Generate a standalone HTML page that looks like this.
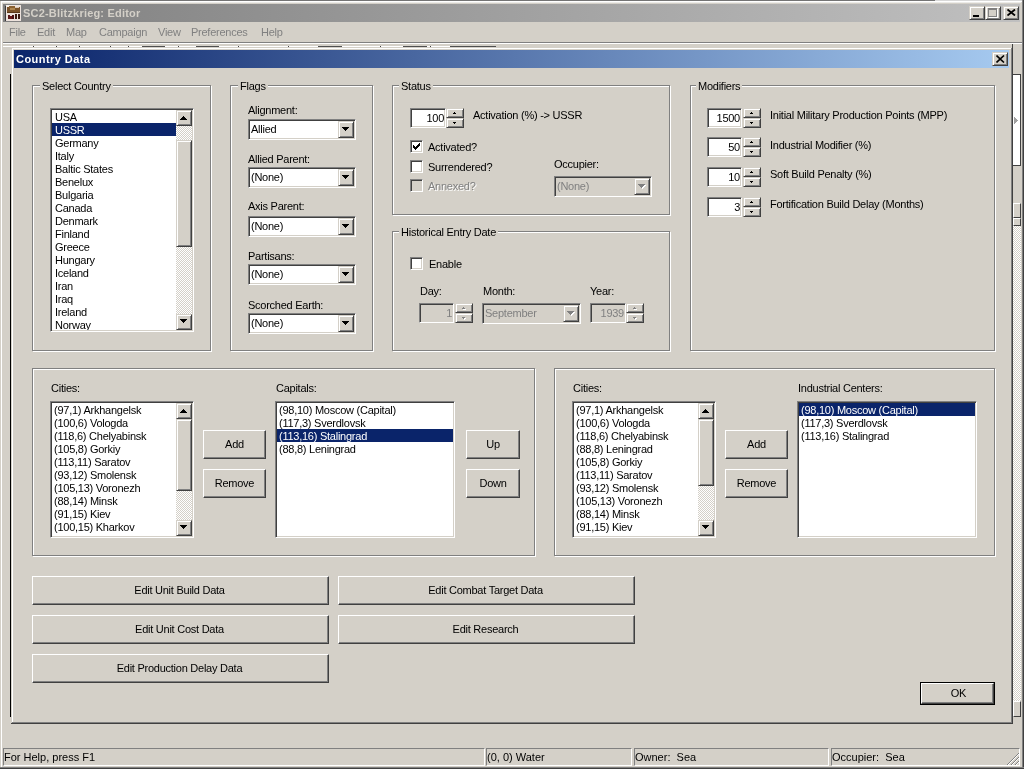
<!DOCTYPE html><html><head><meta charset="utf-8"><style>
html,body{margin:0;padding:0;width:1024px;height:769px;overflow:hidden;background:#d4d0c8}
div{position:absolute;box-sizing:border-box}
.t{will-change:transform;font-family:"Liberation Sans",sans-serif;font-size:11px;line-height:13px;white-space:pre;color:#000}
</style></head><body>
<div style="left:0px;top:0px;width:1024px;height:769px;background:#d4d0c8"></div>
<div style="left:0px;top:0px;width:935px;height:1px;background:#747474"></div>
<div style="left:935px;top:0px;width:89px;height:1px;background:#d8d8d8"></div>
<div style="left:2px;top:2px;width:1019px;height:1px;background:#ecebe8"></div>
<div style="left:1px;top:1px;width:1021px;height:1px;background:#ffffff"></div>
<div style="left:1px;top:1px;width:1px;height:766px;background:#ffffff"></div>
<div style="left:1022px;top:0px;width:1px;height:769px;background:#808080"></div>
<div style="left:1023px;top:0px;width:1px;height:769px;background:#404040"></div>
<div style="left:0px;top:767px;width:1024px;height:1px;background:#808080"></div>
<div style="left:0px;top:768px;width:1024px;height:1px;background:#404040"></div>
<div style="left:3px;top:4px;width:1017px;height:18px;background:linear-gradient(to right,#808080,#c0c0c0)"></div>
<svg style="position:absolute;left:5px;top:5px" width="16" height="16" viewBox="0 0 16 16" shape-rendering="crispEdges">
<rect x="1" y="0" width="15" height="16" fill="#ece2dc"/>
<rect x="0" y="1" width="1" height="15" fill="#3a3a3a"/>
<rect x="2" y="2" width="13" height="6" fill="#7a5228"/>
<rect x="1" y="0" width="4" height="2" fill="#f4eee8"/>
<rect x="4" y="1" width="6" height="2" fill="#8a6030"/>
<rect x="5" y="3" width="5" height="2" fill="#b08850"/>
<rect x="10" y="2" width="4" height="1" fill="#d8c8b8"/>
<rect x="2" y="7" width="13" height="1" fill="#5a3818"/>
<rect x="3" y="10" width="2" height="4" fill="#5a1818"/>
<rect x="5" y="11" width="2" height="3" fill="#6a1818"/>
<rect x="7" y="10" width="2" height="4" fill="#4a1010"/>
<rect x="10" y="9" width="2" height="5" fill="#3a1a10"/>
<rect x="13" y="9" width="2" height="5" fill="#3a1a10"/>
</svg>
<div class="t" style="left:23px;top:7px;color:#d4d0c8;font-weight:bold;letter-spacing:0.2px;font-size:11px;">SC2-Blitzkrieg: Editor</div>
<div style="left:969px;top:6px;width:16px;height:14px;background:#d4d0c8;border-style:solid;border-width:1px;border-color:#d4d0c8 #404040 #404040 #d4d0c8;box-shadow:inset 1px 1px #ffffff,inset -1px -1px #808080"></div>
<div style="left:985px;top:6px;width:16px;height:14px;background:#d4d0c8;border-style:solid;border-width:1px;border-color:#d4d0c8 #404040 #404040 #d4d0c8;box-shadow:inset 1px 1px #ffffff,inset -1px -1px #808080"></div>
<div style="left:1003px;top:6px;width:16px;height:14px;background:#d4d0c8;border-style:solid;border-width:1px;border-color:#d4d0c8 #404040 #404040 #d4d0c8;box-shadow:inset 1px 1px #ffffff,inset -1px -1px #808080"></div>
<div style="left:973px;top:15px;width:6px;height:2px;background:#000"></div>
<div style="left:988px;top:8px;width:9px;height:9px;border:1px solid #808080;border-top-width:2px;box-shadow:1px 1px #ffffff"></div>
<svg style="position:absolute;left:1007px;top:9px" width="9" height="7"><path d="M0.5 0.5 L8 6.5 M8 0.5 L0.5 6.5" stroke="#000" stroke-width="1.8"/></svg>
<div class="t" style="left:9px;top:26px;color:#808080;letter-spacing:-0.25px;font-size:11px;">File</div>
<div class="t" style="left:37px;top:26px;color:#808080;letter-spacing:-0.25px;font-size:11px;">Edit</div>
<div class="t" style="left:66px;top:26px;color:#808080;letter-spacing:-0.25px;font-size:11px;">Map</div>
<div class="t" style="left:99px;top:26px;color:#808080;letter-spacing:-0.25px;font-size:11px;">Campaign</div>
<div class="t" style="left:158px;top:26px;color:#808080;letter-spacing:-0.25px;font-size:11px;">View</div>
<div class="t" style="left:191px;top:26px;color:#808080;letter-spacing:-0.25px;font-size:11px;">Preferences</div>
<div class="t" style="left:261px;top:26px;color:#808080;letter-spacing:-0.25px;font-size:11px;">Help</div>
<div style="left:3px;top:42px;width:1019px;height:1px;background:#808080"></div>
<div style="left:3px;top:43px;width:1019px;height:1px;background:#ffffff"></div>
<div style="left:3px;top:46px;width:493px;height:1px;background:#ffffff"></div>
<div style="left:142px;top:46px;width:23px;height:1px;background:#505050"></div>
<div style="left:196px;top:46px;width:23px;height:1px;background:#505050"></div>
<div style="left:318px;top:46px;width:24px;height:1px;background:#505050"></div>
<div style="left:403px;top:46px;width:24px;height:1px;background:#505050"></div>
<div style="left:450px;top:46px;width:23px;height:1px;background:#505050"></div>
<div style="left:473px;top:46px;width:23px;height:1px;background:#505050"></div>
<div style="left:33px;top:46px;width:1px;height:1px;background:#404040"></div>
<div style="left:56px;top:46px;width:1px;height:1px;background:#404040"></div>
<div style="left:79px;top:46px;width:1px;height:1px;background:#404040"></div>
<div style="left:110px;top:46px;width:1px;height:1px;background:#404040"></div>
<div style="left:128px;top:46px;width:1px;height:1px;background:#404040"></div>
<div style="left:178px;top:46px;width:1px;height:1px;background:#404040"></div>
<div style="left:238px;top:46px;width:1px;height:1px;background:#404040"></div>
<div style="left:288px;top:46px;width:1px;height:1px;background:#404040"></div>
<div style="left:380px;top:46px;width:1px;height:1px;background:#404040"></div>
<div style="left:430px;top:46px;width:1px;height:1px;background:#404040"></div>
<div style="left:1012px;top:44px;width:1px;height:679px;background:#404040"></div>
<div style="left:1013px;top:74px;width:7px;height:91px;background:#ffffff"></div>
<div style="left:1020px;top:74px;width:1px;height:92px;background:#404040"></div>
<div style="left:1013px;top:74px;width:7px;height:1px;background:#404040"></div>
<div style="left:1013px;top:165px;width:7px;height:1px;background:#404040"></div>
<div style="left:1014px;top:117px;width:1px;height:1px;background:#a0a0a0"></div>
<div style="left:1014px;top:118px;width:2px;height:1px;background:#a0a0a0"></div>
<div style="left:1014px;top:119px;width:3px;height:1px;background:#a0a0a0"></div>
<div style="left:1014px;top:120px;width:4px;height:1px;background:#a0a0a0"></div>
<div style="left:1014px;top:121px;width:3px;height:1px;background:#a0a0a0"></div>
<div style="left:1014px;top:122px;width:2px;height:1px;background:#a0a0a0"></div>
<div style="left:1014px;top:123px;width:1px;height:1px;background:#a0a0a0"></div>
<div style="left:1013px;top:203px;width:8px;height:15px;background:#d4d0c8;border-style:solid;border-width:1px;border-color:#ffffff #404040 #404040 #ffffff"></div>
<div style="left:1013px;top:218px;width:8px;height:8px;background:#d4d0c8;border-style:solid;border-width:1px;border-color:#ffffff #404040 #404040 #ffffff"></div>
<div style="left:1013px;top:226px;width:8px;height:475px;background-color:#fff;background-image:linear-gradient(45deg,#d4d0c8 25%,transparent 25%,transparent 75%,#d4d0c8 75%),linear-gradient(45deg,#d4d0c8 25%,transparent 25%,transparent 75%,#d4d0c8 75%);background-size:2px 2px;background-position:0 0,1px 1px"></div>
<div style="left:1013px;top:701px;width:8px;height:16px;background:#d4d0c8;border-style:solid;border-width:1px;border-color:#ffffff #404040 #404040 #ffffff"></div>
<div style="left:10px;top:74px;width:1px;height:643px;background:#000"></div>
<div style="left:11px;top:47px;width:1002px;height:677px;background:#d4d0c8"></div>
<div style="left:12px;top:48px;width:999px;height:1px;background:#ffffff"></div>
<div style="left:12px;top:48px;width:1px;height:675px;background:#ffffff"></div>
<div style="left:1011px;top:48px;width:1px;height:675px;background:#808080"></div>
<div style="left:12px;top:722px;width:1000px;height:1px;background:#808080"></div>
<div style="left:1012px;top:47px;width:1px;height:677px;background:#404040"></div>
<div style="left:11px;top:723px;width:1002px;height:1px;background:#404040"></div>
<div style="left:14px;top:50px;width:995px;height:18px;background:linear-gradient(to right,#0a246a,#a6caf0)"></div>
<div class="t" style="left:16px;top:53px;color:#fff;font-weight:bold;letter-spacing:0.45px;font-size:11px;">Country Data</div>
<div style="left:992px;top:52px;width:16px;height:14px;background:#d4d0c8;border-style:solid;border-width:1px;border-color:#d4d0c8 #404040 #404040 #d4d0c8;box-shadow:inset 1px 1px #ffffff,inset -1px -1px #808080"></div>
<svg style="position:absolute;left:996px;top:55px" width="9" height="8"><path d="M0.5 0.5 L8 7.5 M8 0.5 L0.5 7.5" stroke="#000" stroke-width="1.6"/></svg>
<div style="left:32px;top:85px;width:179px;height:266px;border:1px solid #808080;box-shadow:inset 1px 1px #ffffff,1px 1px #ffffff"></div>
<div class="t" style="left:40px;top:80px;padding:0 2px;background:#d4d0c8;letter-spacing:-0.25px;height:13px">Select Country</div>
<div style="left:230px;top:85px;width:143px;height:266px;border:1px solid #808080;box-shadow:inset 1px 1px #ffffff,1px 1px #ffffff"></div>
<div class="t" style="left:238px;top:80px;padding:0 2px;background:#d4d0c8;letter-spacing:-0.25px;height:13px">Flags</div>
<div style="left:392px;top:85px;width:278px;height:130px;border:1px solid #808080;box-shadow:inset 1px 1px #ffffff,1px 1px #ffffff"></div>
<div class="t" style="left:399px;top:80px;padding:0 2px;background:#d4d0c8;letter-spacing:-0.25px;height:13px">Status</div>
<div style="left:392px;top:231px;width:278px;height:120px;border:1px solid #808080;box-shadow:inset 1px 1px #ffffff,1px 1px #ffffff"></div>
<div class="t" style="left:399px;top:226px;padding:0 2px;background:#d4d0c8;letter-spacing:-0.25px;height:13px">Historical Entry Date</div>
<div style="left:690px;top:85px;width:305px;height:266px;border:1px solid #808080;box-shadow:inset 1px 1px #ffffff,1px 1px #ffffff"></div>
<div class="t" style="left:696px;top:80px;padding:0 2px;background:#d4d0c8;letter-spacing:-0.25px;height:13px">Modifiers</div>
<div style="left:32px;top:368px;width:503px;height:188px;border:1px solid #808080;box-shadow:inset 1px 1px #ffffff,1px 1px #ffffff"></div>
<div style="left:554px;top:368px;width:441px;height:188px;border:1px solid #808080;box-shadow:inset 1px 1px #ffffff,1px 1px #ffffff"></div>
<div style="left:50px;top:108px;width:144px;height:224px;background:#ffffff;border-style:solid;border-width:1px;border-color:#808080 #ffffff #ffffff #808080;box-shadow:inset 1px 1px #404040,inset -1px -1px #d4d0c8"></div>
<div style="left:52px;top:110px;width:124px;height:220px;overflow:hidden">
<div class="t" style="left:3px;top:1px;color:#000;letter-spacing:-0.25px">USA</div>
<div style="left:0;top:13px;width:124px;height:13px;background:#0a246a"></div>
<div class="t" style="left:3px;top:14px;color:#fff;letter-spacing:-0.25px">USSR</div>
<div class="t" style="left:3px;top:27px;color:#000;letter-spacing:-0.25px">Germany</div>
<div class="t" style="left:3px;top:40px;color:#000;letter-spacing:-0.25px">Italy</div>
<div class="t" style="left:3px;top:53px;color:#000;letter-spacing:-0.25px">Baltic States</div>
<div class="t" style="left:3px;top:66px;color:#000;letter-spacing:-0.25px">Benelux</div>
<div class="t" style="left:3px;top:79px;color:#000;letter-spacing:-0.25px">Bulgaria</div>
<div class="t" style="left:3px;top:92px;color:#000;letter-spacing:-0.25px">Canada</div>
<div class="t" style="left:3px;top:105px;color:#000;letter-spacing:-0.25px">Denmark</div>
<div class="t" style="left:3px;top:118px;color:#000;letter-spacing:-0.25px">Finland</div>
<div class="t" style="left:3px;top:131px;color:#000;letter-spacing:-0.25px">Greece</div>
<div class="t" style="left:3px;top:144px;color:#000;letter-spacing:-0.25px">Hungary</div>
<div class="t" style="left:3px;top:157px;color:#000;letter-spacing:-0.25px">Iceland</div>
<div class="t" style="left:3px;top:170px;color:#000;letter-spacing:-0.25px">Iran</div>
<div class="t" style="left:3px;top:183px;color:#000;letter-spacing:-0.25px">Iraq</div>
<div class="t" style="left:3px;top:196px;color:#000;letter-spacing:-0.25px">Ireland</div>
<div class="t" style="left:3px;top:209px;color:#000;letter-spacing:-0.25px">Norway</div>
<div class="t" style="left:3px;top:222px;color:#000;letter-spacing:-0.25px">Poland</div>
</div>
<div style="left:176px;top:110px;width:16px;height:220px;background-color:#fff;background-image:linear-gradient(45deg,#d4d0c8 25%,transparent 25%,transparent 75%,#d4d0c8 75%),linear-gradient(45deg,#d4d0c8 25%,transparent 25%,transparent 75%,#d4d0c8 75%);background-size:2px 2px;background-position:0 0,1px 1px"></div>
<div style="left:176px;top:110px;width:16px;height:16px;background:#d4d0c8;border-style:solid;border-width:1px;border-color:#d4d0c8 #404040 #404040 #d4d0c8;box-shadow:inset 1px 1px #ffffff,inset -1px -1px #808080"></div>
<div style="left:183px;top:116px;width:1px;height:1px;background:#000"></div>
<div style="left:182px;top:117px;width:3px;height:1px;background:#000"></div>
<div style="left:181px;top:118px;width:5px;height:1px;background:#000"></div>
<div style="left:180px;top:119px;width:7px;height:1px;background:#000"></div>
<div style="left:176px;top:314px;width:16px;height:16px;background:#d4d0c8;border-style:solid;border-width:1px;border-color:#d4d0c8 #404040 #404040 #d4d0c8;box-shadow:inset 1px 1px #ffffff,inset -1px -1px #808080"></div>
<div style="left:180px;top:319px;width:7px;height:1px;background:#000"></div>
<div style="left:181px;top:320px;width:5px;height:1px;background:#000"></div>
<div style="left:182px;top:321px;width:3px;height:1px;background:#000"></div>
<div style="left:183px;top:322px;width:1px;height:1px;background:#000"></div>
<div style="left:176px;top:140px;width:16px;height:107px;background:#d4d0c8;border-style:solid;border-width:1px;border-color:#d4d0c8 #404040 #404040 #d4d0c8;box-shadow:inset 1px 1px #ffffff,inset -1px -1px #808080"></div>
<div class="t" style="left:248px;top:104px;color:#000;letter-spacing:-0.25px;font-size:11px;">Alignment:</div>
<div style="left:248px;top:119px;width:108px;height:21px;background:#ffffff;border-style:solid;border-width:1px;border-color:#808080 #ffffff #ffffff #808080;box-shadow:inset 1px 1px #404040,inset -1px -1px #d4d0c8"></div>
<div style="left:338px;top:121px;width:16px;height:17px;background:#d4d0c8;border-style:solid;border-width:1px;border-color:#d4d0c8 #404040 #404040 #d4d0c8;box-shadow:inset 1px 1px #ffffff,inset -1px -1px #808080"></div>
<div style="left:342px;top:127px;width:7px;height:1px;background:#000"></div>
<div style="left:343px;top:128px;width:5px;height:1px;background:#000"></div>
<div style="left:344px;top:129px;width:3px;height:1px;background:#000"></div>
<div style="left:345px;top:130px;width:1px;height:1px;background:#000"></div>
<div class="t" style="left:251px;top:123px;color:#000;letter-spacing:-0.25px;font-size:11px;">Allied</div>
<div class="t" style="left:248px;top:153px;color:#000;letter-spacing:-0.25px;font-size:11px;">Allied Parent:</div>
<div style="left:248px;top:167px;width:108px;height:21px;background:#ffffff;border-style:solid;border-width:1px;border-color:#808080 #ffffff #ffffff #808080;box-shadow:inset 1px 1px #404040,inset -1px -1px #d4d0c8"></div>
<div style="left:338px;top:169px;width:16px;height:17px;background:#d4d0c8;border-style:solid;border-width:1px;border-color:#d4d0c8 #404040 #404040 #d4d0c8;box-shadow:inset 1px 1px #ffffff,inset -1px -1px #808080"></div>
<div style="left:342px;top:175px;width:7px;height:1px;background:#000"></div>
<div style="left:343px;top:176px;width:5px;height:1px;background:#000"></div>
<div style="left:344px;top:177px;width:3px;height:1px;background:#000"></div>
<div style="left:345px;top:178px;width:1px;height:1px;background:#000"></div>
<div class="t" style="left:251px;top:171px;color:#000;letter-spacing:-0.25px;font-size:11px;">(None)</div>
<div class="t" style="left:248px;top:200px;color:#000;letter-spacing:-0.25px;font-size:11px;">Axis Parent:</div>
<div style="left:248px;top:216px;width:108px;height:21px;background:#ffffff;border-style:solid;border-width:1px;border-color:#808080 #ffffff #ffffff #808080;box-shadow:inset 1px 1px #404040,inset -1px -1px #d4d0c8"></div>
<div style="left:338px;top:218px;width:16px;height:17px;background:#d4d0c8;border-style:solid;border-width:1px;border-color:#d4d0c8 #404040 #404040 #d4d0c8;box-shadow:inset 1px 1px #ffffff,inset -1px -1px #808080"></div>
<div style="left:342px;top:224px;width:7px;height:1px;background:#000"></div>
<div style="left:343px;top:225px;width:5px;height:1px;background:#000"></div>
<div style="left:344px;top:226px;width:3px;height:1px;background:#000"></div>
<div style="left:345px;top:227px;width:1px;height:1px;background:#000"></div>
<div class="t" style="left:251px;top:220px;color:#000;letter-spacing:-0.25px;font-size:11px;">(None)</div>
<div class="t" style="left:248px;top:250px;color:#000;letter-spacing:-0.25px;font-size:11px;">Partisans:</div>
<div style="left:248px;top:264px;width:108px;height:21px;background:#ffffff;border-style:solid;border-width:1px;border-color:#808080 #ffffff #ffffff #808080;box-shadow:inset 1px 1px #404040,inset -1px -1px #d4d0c8"></div>
<div style="left:338px;top:266px;width:16px;height:17px;background:#d4d0c8;border-style:solid;border-width:1px;border-color:#d4d0c8 #404040 #404040 #d4d0c8;box-shadow:inset 1px 1px #ffffff,inset -1px -1px #808080"></div>
<div style="left:342px;top:272px;width:7px;height:1px;background:#000"></div>
<div style="left:343px;top:273px;width:5px;height:1px;background:#000"></div>
<div style="left:344px;top:274px;width:3px;height:1px;background:#000"></div>
<div style="left:345px;top:275px;width:1px;height:1px;background:#000"></div>
<div class="t" style="left:251px;top:268px;color:#000;letter-spacing:-0.25px;font-size:11px;">(None)</div>
<div class="t" style="left:248px;top:299px;color:#000;letter-spacing:-0.25px;font-size:11px;">Scorched Earth:</div>
<div style="left:248px;top:313px;width:108px;height:21px;background:#ffffff;border-style:solid;border-width:1px;border-color:#808080 #ffffff #ffffff #808080;box-shadow:inset 1px 1px #404040,inset -1px -1px #d4d0c8"></div>
<div style="left:338px;top:315px;width:16px;height:17px;background:#d4d0c8;border-style:solid;border-width:1px;border-color:#d4d0c8 #404040 #404040 #d4d0c8;box-shadow:inset 1px 1px #ffffff,inset -1px -1px #808080"></div>
<div style="left:342px;top:321px;width:7px;height:1px;background:#000"></div>
<div style="left:343px;top:322px;width:5px;height:1px;background:#000"></div>
<div style="left:344px;top:323px;width:3px;height:1px;background:#000"></div>
<div style="left:345px;top:324px;width:1px;height:1px;background:#000"></div>
<div class="t" style="left:251px;top:317px;color:#000;letter-spacing:-0.25px;font-size:11px;">(None)</div>
<div style="left:410px;top:108px;width:36px;height:20px;background:#ffffff;border-style:solid;border-width:1px;border-color:#808080 #ffffff #ffffff #808080;box-shadow:inset 1px 1px #404040,inset -1px -1px #d4d0c8"></div>
<div class="t" style="left:244px;top:112px;width:200px;text-align:right;color:#000;letter-spacing:-0.25px">100</div>
<div style="left:446px;top:108px;width:18px;height:10px;background:#d4d0c8;border-style:solid;border-width:1px;border-color:#d4d0c8 #404040 #404040 #d4d0c8;box-shadow:inset 1px 1px #ffffff,inset -1px -1px #808080"></div>
<div style="left:446px;top:118px;width:18px;height:10px;background:#d4d0c8;border-style:solid;border-width:1px;border-color:#d4d0c8 #404040 #404040 #d4d0c8;box-shadow:inset 1px 1px #ffffff,inset -1px -1px #808080"></div>
<div style="left:454px;top:112px;width:1px;height:1px;background:#000"></div>
<div style="left:453px;top:113px;width:3px;height:1px;background:#000"></div>
<div style="left:453px;top:122px;width:3px;height:1px;background:#000"></div>
<div style="left:454px;top:123px;width:1px;height:1px;background:#000"></div>
<div class="t" style="left:473px;top:109px;color:#000;letter-spacing:-0.25px;font-size:11px;">Activation (%) -&gt; USSR</div>
<div style="left:410px;top:140px;width:13px;height:13px;background:#ffffff;border-style:solid;border-width:1px;border-color:#808080 #ffffff #ffffff #808080;box-shadow:inset 1px 1px #404040,inset -1px -1px #d4d0c8"></div>
<div style="left:413px;top:145px;width:1px;height:3px;background:#000"></div>
<div style="left:414px;top:146px;width:1px;height:3px;background:#000"></div>
<div style="left:415px;top:147px;width:1px;height:3px;background:#000"></div>
<div style="left:416px;top:146px;width:1px;height:3px;background:#000"></div>
<div style="left:417px;top:145px;width:1px;height:3px;background:#000"></div>
<div style="left:418px;top:144px;width:1px;height:3px;background:#000"></div>
<div style="left:419px;top:143px;width:1px;height:3px;background:#000"></div>
<div class="t" style="left:428px;top:141px;color:#000;letter-spacing:-0.25px;font-size:11px;">Activated?</div>
<div style="left:410px;top:160px;width:13px;height:13px;background:#ffffff;border-style:solid;border-width:1px;border-color:#808080 #ffffff #ffffff #808080;box-shadow:inset 1px 1px #404040,inset -1px -1px #d4d0c8"></div>
<div class="t" style="left:428px;top:161px;color:#000;letter-spacing:-0.25px;font-size:11px;">Surrendered?</div>
<div style="left:410px;top:179px;width:13px;height:13px;background:#d4d0c8;border-style:solid;border-width:1px;border-color:#808080 #ffffff #ffffff #808080;box-shadow:inset 1px 1px #404040,inset -1px -1px #d4d0c8"></div>
<div class="t" style="left:428px;top:180px;color:#808080;letter-spacing:-0.25px;font-size:11px;text-shadow:1px 1px #fff">Annexed?</div>
<div class="t" style="left:554px;top:158px;color:#000;letter-spacing:-0.25px;font-size:11px;">Occupier:</div>
<div style="left:554px;top:176px;width:98px;height:21px;background:#d4d0c8;border-style:solid;border-width:1px;border-color:#808080 #ffffff #ffffff #808080;box-shadow:inset 1px 1px #404040,inset -1px -1px #d4d0c8"></div>
<div style="left:634px;top:178px;width:16px;height:17px;background:#d4d0c8;border-style:solid;border-width:1px;border-color:#d4d0c8 #404040 #404040 #d4d0c8;box-shadow:inset 1px 1px #ffffff,inset -1px -1px #808080"></div>
<div style="left:639px;top:185px;width:7px;height:1px;background:#ffffff"></div>
<div style="left:640px;top:186px;width:5px;height:1px;background:#ffffff"></div>
<div style="left:641px;top:187px;width:3px;height:1px;background:#ffffff"></div>
<div style="left:642px;top:188px;width:1px;height:1px;background:#ffffff"></div>
<div style="left:638px;top:184px;width:7px;height:1px;background:#808080"></div>
<div style="left:639px;top:185px;width:5px;height:1px;background:#808080"></div>
<div style="left:640px;top:186px;width:3px;height:1px;background:#808080"></div>
<div style="left:641px;top:187px;width:1px;height:1px;background:#808080"></div>
<div class="t" style="left:557px;top:180px;color:#808080;letter-spacing:-0.25px;font-size:11px;">(None)</div>
<div style="left:410px;top:257px;width:13px;height:13px;background:#ffffff;border-style:solid;border-width:1px;border-color:#808080 #ffffff #ffffff #808080;box-shadow:inset 1px 1px #404040,inset -1px -1px #d4d0c8"></div>
<div class="t" style="left:429px;top:258px;color:#000;letter-spacing:-0.25px;font-size:11px;">Enable</div>
<div class="t" style="left:420px;top:285px;color:#000;letter-spacing:-0.25px;font-size:11px;">Day:</div>
<div class="t" style="left:483px;top:285px;color:#000;letter-spacing:-0.25px;font-size:11px;">Month:</div>
<div class="t" style="left:590px;top:285px;color:#000;letter-spacing:-0.25px;font-size:11px;">Year:</div>
<div style="left:419px;top:303px;width:35px;height:20px;background:#d4d0c8;border-style:solid;border-width:1px;border-color:#808080 #ffffff #ffffff #808080;box-shadow:inset 1px 1px #404040,inset -1px -1px #d4d0c8"></div>
<div class="t" style="left:252px;top:307px;width:200px;text-align:right;color:#808080;letter-spacing:-0.25px">1</div>
<div style="left:455px;top:303px;width:18px;height:10px;background:#d4d0c8;border-style:solid;border-width:1px;border-color:#d4d0c8 #404040 #404040 #d4d0c8;box-shadow:inset 1px 1px #ffffff,inset -1px -1px #808080"></div>
<div style="left:455px;top:313px;width:18px;height:10px;background:#d4d0c8;border-style:solid;border-width:1px;border-color:#d4d0c8 #404040 #404040 #d4d0c8;box-shadow:inset 1px 1px #ffffff,inset -1px -1px #808080"></div>
<div style="left:464px;top:308px;width:1px;height:1px;background:#ffffff"></div>
<div style="left:463px;top:309px;width:3px;height:1px;background:#ffffff"></div>
<div style="left:463px;top:318px;width:3px;height:1px;background:#ffffff"></div>
<div style="left:464px;top:319px;width:1px;height:1px;background:#ffffff"></div>
<div style="left:463px;top:307px;width:1px;height:1px;background:#808080"></div>
<div style="left:462px;top:308px;width:3px;height:1px;background:#808080"></div>
<div style="left:462px;top:317px;width:3px;height:1px;background:#808080"></div>
<div style="left:463px;top:318px;width:1px;height:1px;background:#808080"></div>
<div style="left:482px;top:303px;width:99px;height:21px;background:#d4d0c8;border-style:solid;border-width:1px;border-color:#808080 #ffffff #ffffff #808080;box-shadow:inset 1px 1px #404040,inset -1px -1px #d4d0c8"></div>
<div style="left:563px;top:305px;width:16px;height:17px;background:#d4d0c8;border-style:solid;border-width:1px;border-color:#d4d0c8 #404040 #404040 #d4d0c8;box-shadow:inset 1px 1px #ffffff,inset -1px -1px #808080"></div>
<div style="left:568px;top:312px;width:7px;height:1px;background:#ffffff"></div>
<div style="left:569px;top:313px;width:5px;height:1px;background:#ffffff"></div>
<div style="left:570px;top:314px;width:3px;height:1px;background:#ffffff"></div>
<div style="left:571px;top:315px;width:1px;height:1px;background:#ffffff"></div>
<div style="left:567px;top:311px;width:7px;height:1px;background:#808080"></div>
<div style="left:568px;top:312px;width:5px;height:1px;background:#808080"></div>
<div style="left:569px;top:313px;width:3px;height:1px;background:#808080"></div>
<div style="left:570px;top:314px;width:1px;height:1px;background:#808080"></div>
<div class="t" style="left:485px;top:307px;color:#808080;letter-spacing:-0.25px;font-size:11px;">September</div>
<div style="left:590px;top:303px;width:36px;height:20px;background:#d4d0c8;border-style:solid;border-width:1px;border-color:#808080 #ffffff #ffffff #808080;box-shadow:inset 1px 1px #404040,inset -1px -1px #d4d0c8"></div>
<div class="t" style="left:424px;top:307px;width:200px;text-align:right;color:#808080;letter-spacing:-0.25px">1939</div>
<div style="left:626px;top:303px;width:18px;height:10px;background:#d4d0c8;border-style:solid;border-width:1px;border-color:#d4d0c8 #404040 #404040 #d4d0c8;box-shadow:inset 1px 1px #ffffff,inset -1px -1px #808080"></div>
<div style="left:626px;top:313px;width:18px;height:10px;background:#d4d0c8;border-style:solid;border-width:1px;border-color:#d4d0c8 #404040 #404040 #d4d0c8;box-shadow:inset 1px 1px #ffffff,inset -1px -1px #808080"></div>
<div style="left:635px;top:308px;width:1px;height:1px;background:#ffffff"></div>
<div style="left:634px;top:309px;width:3px;height:1px;background:#ffffff"></div>
<div style="left:634px;top:318px;width:3px;height:1px;background:#ffffff"></div>
<div style="left:635px;top:319px;width:1px;height:1px;background:#ffffff"></div>
<div style="left:634px;top:307px;width:1px;height:1px;background:#808080"></div>
<div style="left:633px;top:308px;width:3px;height:1px;background:#808080"></div>
<div style="left:633px;top:317px;width:3px;height:1px;background:#808080"></div>
<div style="left:634px;top:318px;width:1px;height:1px;background:#808080"></div>
<div style="left:707px;top:108px;width:35px;height:20px;background:#ffffff;border-style:solid;border-width:1px;border-color:#808080 #ffffff #ffffff #808080;box-shadow:inset 1px 1px #404040,inset -1px -1px #d4d0c8"></div>
<div class="t" style="left:540px;top:112px;width:200px;text-align:right;color:#000;letter-spacing:-0.25px">1500</div>
<div style="left:743px;top:108px;width:18px;height:10px;background:#d4d0c8;border-style:solid;border-width:1px;border-color:#d4d0c8 #404040 #404040 #d4d0c8;box-shadow:inset 1px 1px #ffffff,inset -1px -1px #808080"></div>
<div style="left:743px;top:118px;width:18px;height:10px;background:#d4d0c8;border-style:solid;border-width:1px;border-color:#d4d0c8 #404040 #404040 #d4d0c8;box-shadow:inset 1px 1px #ffffff,inset -1px -1px #808080"></div>
<div style="left:751px;top:112px;width:1px;height:1px;background:#000"></div>
<div style="left:750px;top:113px;width:3px;height:1px;background:#000"></div>
<div style="left:750px;top:122px;width:3px;height:1px;background:#000"></div>
<div style="left:751px;top:123px;width:1px;height:1px;background:#000"></div>
<div class="t" style="left:770px;top:109px;color:#000;letter-spacing:-0.25px;font-size:11px;">Initial Military Production Points (MPP)</div>
<div style="left:707px;top:137px;width:35px;height:20px;background:#ffffff;border-style:solid;border-width:1px;border-color:#808080 #ffffff #ffffff #808080;box-shadow:inset 1px 1px #404040,inset -1px -1px #d4d0c8"></div>
<div class="t" style="left:540px;top:141px;width:200px;text-align:right;color:#000;letter-spacing:-0.25px">50</div>
<div style="left:743px;top:137px;width:18px;height:10px;background:#d4d0c8;border-style:solid;border-width:1px;border-color:#d4d0c8 #404040 #404040 #d4d0c8;box-shadow:inset 1px 1px #ffffff,inset -1px -1px #808080"></div>
<div style="left:743px;top:147px;width:18px;height:10px;background:#d4d0c8;border-style:solid;border-width:1px;border-color:#d4d0c8 #404040 #404040 #d4d0c8;box-shadow:inset 1px 1px #ffffff,inset -1px -1px #808080"></div>
<div style="left:751px;top:141px;width:1px;height:1px;background:#000"></div>
<div style="left:750px;top:142px;width:3px;height:1px;background:#000"></div>
<div style="left:750px;top:151px;width:3px;height:1px;background:#000"></div>
<div style="left:751px;top:152px;width:1px;height:1px;background:#000"></div>
<div class="t" style="left:770px;top:139px;color:#000;letter-spacing:-0.25px;font-size:11px;">Industrial Modifier (%)</div>
<div style="left:707px;top:167px;width:35px;height:20px;background:#ffffff;border-style:solid;border-width:1px;border-color:#808080 #ffffff #ffffff #808080;box-shadow:inset 1px 1px #404040,inset -1px -1px #d4d0c8"></div>
<div class="t" style="left:540px;top:171px;width:200px;text-align:right;color:#000;letter-spacing:-0.25px">10</div>
<div style="left:743px;top:167px;width:18px;height:10px;background:#d4d0c8;border-style:solid;border-width:1px;border-color:#d4d0c8 #404040 #404040 #d4d0c8;box-shadow:inset 1px 1px #ffffff,inset -1px -1px #808080"></div>
<div style="left:743px;top:177px;width:18px;height:10px;background:#d4d0c8;border-style:solid;border-width:1px;border-color:#d4d0c8 #404040 #404040 #d4d0c8;box-shadow:inset 1px 1px #ffffff,inset -1px -1px #808080"></div>
<div style="left:751px;top:171px;width:1px;height:1px;background:#000"></div>
<div style="left:750px;top:172px;width:3px;height:1px;background:#000"></div>
<div style="left:750px;top:181px;width:3px;height:1px;background:#000"></div>
<div style="left:751px;top:182px;width:1px;height:1px;background:#000"></div>
<div class="t" style="left:770px;top:168px;color:#000;letter-spacing:-0.25px;font-size:11px;">Soft Build Penalty (%)</div>
<div style="left:707px;top:197px;width:35px;height:20px;background:#ffffff;border-style:solid;border-width:1px;border-color:#808080 #ffffff #ffffff #808080;box-shadow:inset 1px 1px #404040,inset -1px -1px #d4d0c8"></div>
<div class="t" style="left:540px;top:201px;width:200px;text-align:right;color:#000;letter-spacing:-0.25px">3</div>
<div style="left:743px;top:197px;width:18px;height:10px;background:#d4d0c8;border-style:solid;border-width:1px;border-color:#d4d0c8 #404040 #404040 #d4d0c8;box-shadow:inset 1px 1px #ffffff,inset -1px -1px #808080"></div>
<div style="left:743px;top:207px;width:18px;height:10px;background:#d4d0c8;border-style:solid;border-width:1px;border-color:#d4d0c8 #404040 #404040 #d4d0c8;box-shadow:inset 1px 1px #ffffff,inset -1px -1px #808080"></div>
<div style="left:751px;top:201px;width:1px;height:1px;background:#000"></div>
<div style="left:750px;top:202px;width:3px;height:1px;background:#000"></div>
<div style="left:750px;top:211px;width:3px;height:1px;background:#000"></div>
<div style="left:751px;top:212px;width:1px;height:1px;background:#000"></div>
<div class="t" style="left:770px;top:198px;color:#000;letter-spacing:-0.25px;font-size:11px;">Fortification Build Delay (Months)</div>
<div class="t" style="left:51px;top:382px;color:#000;letter-spacing:-0.25px;font-size:11px;">Cities:</div>
<div style="left:50px;top:401px;width:144px;height:137px;background:#ffffff;border-style:solid;border-width:1px;border-color:#808080 #ffffff #ffffff #808080;box-shadow:inset 1px 1px #404040,inset -1px -1px #d4d0c8"></div>
<div style="left:52px;top:403px;width:124px;height:133px;overflow:hidden">
<div class="t" style="left:2px;top:1px;color:#000;letter-spacing:-0.25px">(97,1) Arkhangelsk</div>
<div class="t" style="left:2px;top:14px;color:#000;letter-spacing:-0.25px">(100,6) Vologda</div>
<div class="t" style="left:2px;top:27px;color:#000;letter-spacing:-0.25px">(118,6) Chelyabinsk</div>
<div class="t" style="left:2px;top:40px;color:#000;letter-spacing:-0.25px">(105,8) Gorkiy</div>
<div class="t" style="left:2px;top:53px;color:#000;letter-spacing:-0.25px">(113,11) Saratov</div>
<div class="t" style="left:2px;top:66px;color:#000;letter-spacing:-0.25px">(93,12) Smolensk</div>
<div class="t" style="left:2px;top:79px;color:#000;letter-spacing:-0.25px">(105,13) Voronezh</div>
<div class="t" style="left:2px;top:92px;color:#000;letter-spacing:-0.25px">(88,14) Minsk</div>
<div class="t" style="left:2px;top:105px;color:#000;letter-spacing:-0.25px">(91,15) Kiev</div>
<div class="t" style="left:2px;top:118px;color:#000;letter-spacing:-0.25px">(100,15) Kharkov</div>
<div class="t" style="left:2px;top:131px;color:#000;letter-spacing:-0.25px">(107,18) Rostov</div>
</div>
<div style="left:176px;top:403px;width:16px;height:133px;background-color:#fff;background-image:linear-gradient(45deg,#d4d0c8 25%,transparent 25%,transparent 75%,#d4d0c8 75%),linear-gradient(45deg,#d4d0c8 25%,transparent 25%,transparent 75%,#d4d0c8 75%);background-size:2px 2px;background-position:0 0,1px 1px"></div>
<div style="left:176px;top:403px;width:16px;height:16px;background:#d4d0c8;border-style:solid;border-width:1px;border-color:#d4d0c8 #404040 #404040 #d4d0c8;box-shadow:inset 1px 1px #ffffff,inset -1px -1px #808080"></div>
<div style="left:183px;top:409px;width:1px;height:1px;background:#000"></div>
<div style="left:182px;top:410px;width:3px;height:1px;background:#000"></div>
<div style="left:181px;top:411px;width:5px;height:1px;background:#000"></div>
<div style="left:180px;top:412px;width:7px;height:1px;background:#000"></div>
<div style="left:176px;top:520px;width:16px;height:16px;background:#d4d0c8;border-style:solid;border-width:1px;border-color:#d4d0c8 #404040 #404040 #d4d0c8;box-shadow:inset 1px 1px #ffffff,inset -1px -1px #808080"></div>
<div style="left:180px;top:525px;width:7px;height:1px;background:#000"></div>
<div style="left:181px;top:526px;width:5px;height:1px;background:#000"></div>
<div style="left:182px;top:527px;width:3px;height:1px;background:#000"></div>
<div style="left:183px;top:528px;width:1px;height:1px;background:#000"></div>
<div style="left:176px;top:419px;width:16px;height:72px;background:#d4d0c8;border-style:solid;border-width:1px;border-color:#d4d0c8 #404040 #404040 #d4d0c8;box-shadow:inset 1px 1px #ffffff,inset -1px -1px #808080"></div>
<div style="left:203px;top:430px;width:63px;height:29px;background:#d4d0c8;border-style:solid;border-width:1px;border-color:#ffffff #404040 #404040 #ffffff;box-shadow:inset -1px -1px #808080"></div>
<div class="t" style="left:203px;top:438px;width:63px;text-align:center;color:#000;letter-spacing:-0.25px">Add</div>
<div style="left:203px;top:469px;width:63px;height:29px;background:#d4d0c8;border-style:solid;border-width:1px;border-color:#ffffff #404040 #404040 #ffffff;box-shadow:inset -1px -1px #808080"></div>
<div class="t" style="left:203px;top:477px;width:63px;text-align:center;color:#000;letter-spacing:-0.25px">Remove</div>
<div class="t" style="left:276px;top:382px;color:#000;letter-spacing:-0.25px;font-size:11px;">Capitals:</div>
<div style="left:275px;top:401px;width:180px;height:137px;background:#ffffff;border-style:solid;border-width:1px;border-color:#808080 #ffffff #ffffff #808080;box-shadow:inset 1px 1px #404040,inset -1px -1px #d4d0c8"></div>
<div style="left:277px;top:403px;width:176px;height:133px;overflow:hidden">
<div class="t" style="left:2px;top:1px;color:#000;letter-spacing:-0.25px">(98,10) Moscow (Capital)</div>
<div class="t" style="left:2px;top:14px;color:#000;letter-spacing:-0.25px">(117,3) Sverdlovsk</div>
<div style="left:0;top:26px;width:176px;height:13px;background:#0a246a"></div>
<div class="t" style="left:2px;top:27px;color:#fff;letter-spacing:-0.25px">(113,16) Stalingrad</div>
<div class="t" style="left:2px;top:40px;color:#000;letter-spacing:-0.25px">(88,8) Leningrad</div>
</div>
<div style="left:466px;top:430px;width:54px;height:29px;background:#d4d0c8;border-style:solid;border-width:1px;border-color:#ffffff #404040 #404040 #ffffff;box-shadow:inset -1px -1px #808080"></div>
<div class="t" style="left:466px;top:438px;width:54px;text-align:center;color:#000;letter-spacing:-0.25px">Up</div>
<div style="left:466px;top:469px;width:54px;height:29px;background:#d4d0c8;border-style:solid;border-width:1px;border-color:#ffffff #404040 #404040 #ffffff;box-shadow:inset -1px -1px #808080"></div>
<div class="t" style="left:466px;top:477px;width:54px;text-align:center;color:#000;letter-spacing:-0.25px">Down</div>
<div class="t" style="left:573px;top:382px;color:#000;letter-spacing:-0.25px;font-size:11px;">Cities:</div>
<div style="left:572px;top:401px;width:144px;height:137px;background:#ffffff;border-style:solid;border-width:1px;border-color:#808080 #ffffff #ffffff #808080;box-shadow:inset 1px 1px #404040,inset -1px -1px #d4d0c8"></div>
<div style="left:574px;top:403px;width:124px;height:133px;overflow:hidden">
<div class="t" style="left:2px;top:1px;color:#000;letter-spacing:-0.25px">(97,1) Arkhangelsk</div>
<div class="t" style="left:2px;top:14px;color:#000;letter-spacing:-0.25px">(100,6) Vologda</div>
<div class="t" style="left:2px;top:27px;color:#000;letter-spacing:-0.25px">(118,6) Chelyabinsk</div>
<div class="t" style="left:2px;top:40px;color:#000;letter-spacing:-0.25px">(88,8) Leningrad</div>
<div class="t" style="left:2px;top:53px;color:#000;letter-spacing:-0.25px">(105,8) Gorkiy</div>
<div class="t" style="left:2px;top:66px;color:#000;letter-spacing:-0.25px">(113,11) Saratov</div>
<div class="t" style="left:2px;top:79px;color:#000;letter-spacing:-0.25px">(93,12) Smolensk</div>
<div class="t" style="left:2px;top:92px;color:#000;letter-spacing:-0.25px">(105,13) Voronezh</div>
<div class="t" style="left:2px;top:105px;color:#000;letter-spacing:-0.25px">(88,14) Minsk</div>
<div class="t" style="left:2px;top:118px;color:#000;letter-spacing:-0.25px">(91,15) Kiev</div>
<div class="t" style="left:2px;top:131px;color:#000;letter-spacing:-0.25px">(100,15) Kharkov</div>
</div>
<div style="left:698px;top:403px;width:16px;height:133px;background-color:#fff;background-image:linear-gradient(45deg,#d4d0c8 25%,transparent 25%,transparent 75%,#d4d0c8 75%),linear-gradient(45deg,#d4d0c8 25%,transparent 25%,transparent 75%,#d4d0c8 75%);background-size:2px 2px;background-position:0 0,1px 1px"></div>
<div style="left:698px;top:403px;width:16px;height:16px;background:#d4d0c8;border-style:solid;border-width:1px;border-color:#d4d0c8 #404040 #404040 #d4d0c8;box-shadow:inset 1px 1px #ffffff,inset -1px -1px #808080"></div>
<div style="left:705px;top:409px;width:1px;height:1px;background:#000"></div>
<div style="left:704px;top:410px;width:3px;height:1px;background:#000"></div>
<div style="left:703px;top:411px;width:5px;height:1px;background:#000"></div>
<div style="left:702px;top:412px;width:7px;height:1px;background:#000"></div>
<div style="left:698px;top:520px;width:16px;height:16px;background:#d4d0c8;border-style:solid;border-width:1px;border-color:#d4d0c8 #404040 #404040 #d4d0c8;box-shadow:inset 1px 1px #ffffff,inset -1px -1px #808080"></div>
<div style="left:702px;top:525px;width:7px;height:1px;background:#000"></div>
<div style="left:703px;top:526px;width:5px;height:1px;background:#000"></div>
<div style="left:704px;top:527px;width:3px;height:1px;background:#000"></div>
<div style="left:705px;top:528px;width:1px;height:1px;background:#000"></div>
<div style="left:698px;top:419px;width:16px;height:67px;background:#d4d0c8;border-style:solid;border-width:1px;border-color:#d4d0c8 #404040 #404040 #d4d0c8;box-shadow:inset 1px 1px #ffffff,inset -1px -1px #808080"></div>
<div style="left:725px;top:430px;width:63px;height:29px;background:#d4d0c8;border-style:solid;border-width:1px;border-color:#ffffff #404040 #404040 #ffffff;box-shadow:inset -1px -1px #808080"></div>
<div class="t" style="left:725px;top:438px;width:63px;text-align:center;color:#000;letter-spacing:-0.25px">Add</div>
<div style="left:725px;top:469px;width:63px;height:29px;background:#d4d0c8;border-style:solid;border-width:1px;border-color:#ffffff #404040 #404040 #ffffff;box-shadow:inset -1px -1px #808080"></div>
<div class="t" style="left:725px;top:477px;width:63px;text-align:center;color:#000;letter-spacing:-0.25px">Remove</div>
<div class="t" style="left:798px;top:382px;color:#000;letter-spacing:-0.25px;font-size:11px;">Industrial Centers:</div>
<div style="left:797px;top:401px;width:180px;height:137px;background:#ffffff;border-style:solid;border-width:1px;border-color:#808080 #ffffff #ffffff #808080;box-shadow:inset 1px 1px #404040,inset -1px -1px #d4d0c8"></div>
<div style="left:799px;top:403px;width:176px;height:133px;overflow:hidden">
<div style="left:0;top:0px;width:176px;height:13px;background:#0a246a"></div>
<div class="t" style="left:2px;top:1px;color:#fff;letter-spacing:-0.25px">(98,10) Moscow (Capital)</div>
<div class="t" style="left:2px;top:14px;color:#000;letter-spacing:-0.25px">(117,3) Sverdlovsk</div>
<div class="t" style="left:2px;top:27px;color:#000;letter-spacing:-0.25px">(113,16) Stalingrad</div>
</div>
<div style="left:32px;top:576px;width:297px;height:29px;background:#d4d0c8;border-style:solid;border-width:1px;border-color:#ffffff #404040 #404040 #ffffff;box-shadow:inset -1px -1px #808080"></div>
<div class="t" style="left:31px;top:584px;width:297px;text-align:center;color:#000;letter-spacing:-0.25px">Edit Unit Build Data</div>
<div style="left:338px;top:576px;width:297px;height:29px;background:#d4d0c8;border-style:solid;border-width:1px;border-color:#ffffff #404040 #404040 #ffffff;box-shadow:inset -1px -1px #808080"></div>
<div class="t" style="left:337px;top:584px;width:297px;text-align:center;color:#000;letter-spacing:-0.25px">Edit Combat Target Data</div>
<div style="left:32px;top:615px;width:297px;height:29px;background:#d4d0c8;border-style:solid;border-width:1px;border-color:#ffffff #404040 #404040 #ffffff;box-shadow:inset -1px -1px #808080"></div>
<div class="t" style="left:31px;top:623px;width:297px;text-align:center;color:#000;letter-spacing:-0.25px">Edit Unit Cost Data</div>
<div style="left:338px;top:615px;width:297px;height:29px;background:#d4d0c8;border-style:solid;border-width:1px;border-color:#ffffff #404040 #404040 #ffffff;box-shadow:inset -1px -1px #808080"></div>
<div class="t" style="left:337px;top:623px;width:297px;text-align:center;color:#000;letter-spacing:-0.25px">Edit Research</div>
<div style="left:32px;top:654px;width:297px;height:29px;background:#d4d0c8;border-style:solid;border-width:1px;border-color:#ffffff #404040 #404040 #ffffff;box-shadow:inset -1px -1px #808080"></div>
<div class="t" style="left:31px;top:662px;width:297px;text-align:center;color:#000;letter-spacing:-0.25px">Edit Production Delay Data</div>
<div style="left:920px;top:682px;width:75px;height:23px;background:#000"></div>
<div style="left:921px;top:683px;width:73px;height:21px;background:#d4d0c8;border-style:solid;border-width:1px;border-color:#ffffff #404040 #404040 #ffffff;box-shadow:inset -1px -1px #808080"></div>
<div class="t" style="left:921px;top:687px;width:75px;text-align:center;color:#000;letter-spacing:-0.25px">OK</div>
<div style="left:3px;top:748px;width:482px;height:18px;border-style:solid;border-width:1px;border-color:#808080 #ffffff #ffffff #808080"></div>
<div class="t" style="left:4px;top:751px;color:#000;letter-spacing:0px;font-size:11px;">For Help, press F1</div>
<div style="left:486px;top:748px;width:146px;height:18px;border-style:solid;border-width:1px;border-color:#808080 #ffffff #ffffff #808080"></div>
<div class="t" style="left:487px;top:751px;color:#000;letter-spacing:0px;font-size:11px;">(0, 0) Water</div>
<div style="left:634px;top:748px;width:195px;height:18px;border-style:solid;border-width:1px;border-color:#808080 #ffffff #ffffff #808080"></div>
<div class="t" style="left:635px;top:751px;color:#000;letter-spacing:0px;font-size:11px;">Owner:&nbsp; Sea</div>
<div style="left:831px;top:748px;width:189px;height:18px;border-style:solid;border-width:1px;border-color:#808080 #ffffff #ffffff #808080"></div>
<div class="t" style="left:832px;top:751px;color:#000;letter-spacing:0px;font-size:11px;">Occupier:&nbsp; Sea</div>
<svg style="position:absolute;left:1006px;top:752px" width="14" height="14"><path d="M13 1 L1 13 M13 5 L5 13 M13 9 L9 13" stroke="#808080" stroke-width="1"/><path d="M13 2 L2 13 M13 6 L6 13 M13 10 L10 13" stroke="#fff" stroke-width="1"/></svg>
</body></html>
